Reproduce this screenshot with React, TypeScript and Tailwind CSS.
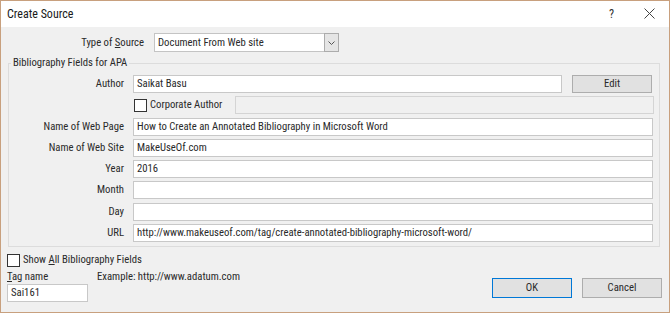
import React from "react";

const Check = ({ className = "" }: { className?: string }) => (
  <span className={"inline-block w-[13px] h-[13px] border border-[#333333] bg-white shrink-0 " + className} />
);

const Field = ({ value = "", className = "" }: { value?: string; className?: string }) => (
  <div className={"h-[18px] bg-white border border-[#c8c8c8] flex items-center pl-[3px] whitespace-nowrap overflow-hidden " + className}>
    {value}
  </div>
);

const Label = ({ children }: { children: React.ReactNode }) => (
  <div className="h-[18px] flex items-center justify-end whitespace-nowrap">{children}</div>
);

export default function App() {
  return (
    <div className="w-[670px] h-[313px] border border-[#c8a07e] flex flex-col bg-[#f0f0f0] font-['Roboto',sans-serif] [font-stretch:condensed] text-[10.7px] text-[#2a2a2a] leading-[14px] overflow-hidden">
      {/* title bar */}
      <div className="h-[26px] shrink-0 bg-white flex items-center pl-[6px] pr-[14px]">
        <span className="text-[12px] text-[#1a1a1a]">Create Source</span>
        <span className="ml-auto text-[12px] text-[#333] mr-[30px]">?</span>
        <svg width="11" height="11" viewBox="0 0 11 11" className="mb-[1px]">
          <path d="M0.5 0.5 L10.5 10.5 M10.5 0.5 L0.5 10.5" stroke="#444" strokeWidth="1" />
        </svg>
      </div>

      <div className="flex flex-col px-[6px]">
        {/* Type of source */}
        <div className="mt-[6px] h-[19px] flex items-center">
          <div className="w-[137px] text-right whitespace-nowrap">
            Type of <span className="underline">S</span>ource
          </div>
          <div className="ml-[10px] w-[185px] h-[19px] bg-white border border-[#c4c4c4] flex items-center">
            <span className="pl-[3px] flex-1 whitespace-nowrap">Document From Web site</span>
            <div className="w-[15px] h-[19px] -mr-[1px] bg-[#e5e5e5] border border-[#acacac] flex items-center justify-center">
              <svg width="7" height="4" viewBox="0 0 7 4">
                <path d="M0.5 0.5 L3.5 3.5 L6.5 0.5" stroke="#555" fill="none" strokeWidth="1" />
              </svg>
            </div>
          </div>
        </div>

        {/* group box */}
        <fieldset className="mt-[4px] ml-[1px] w-[652px] border border-[#dcdcdc] pt-[5px] pb-[4px] pr-[6px]">
          <legend className="ml-[2px] px-[2px] leading-[14px]">Bibliography Fields for APA</legend>
          <div className="grid grid-cols-[115px_1fr] gap-x-[9px] gap-y-[3.3px]">
            <Label>Author</Label>
            <div className="flex gap-[10px]">
              <Field value="Saikat Basu" className="w-[429px]" />
              <div className="w-[80px] h-[18px] bg-[#e1e1e1] border border-[#adadad] flex items-center justify-center">Edit</div>
            </div>

            <div />
            <div className="flex items-center">
              <div className="w-[102px] flex items-center">
                <Check className="ml-[1px]" />
                <span className="ml-[3px] whitespace-nowrap">Corporate Author</span>
              </div>
              <div className="flex-1 h-[18px] bg-[#f0f0f0] border border-[#d4d4d4] mr-[-1px]" />
            </div>

            <Label>Name of Web Page</Label>
            <Field value="How to Create an Annotated Bibliography in Microsoft Word" />
            <Label>Name of Web Site</Label>
            <Field value="MakeUseOf.com" />
            <Label>Year</Label>
            <Field value="2016" />
            <Label>Month</Label>
            <Field />
            <Label>Day</Label>
            <Field />
            <Label>URL</Label>
            <Field value="http://www.makeuseof.com/tag/create-annotated-bibliography-microsoft-word/" />
          </div>
        </fieldset>

        {/* bottom */}
        <div className="flex items-end pr-[1px]">
          <div className="flex flex-col">
            <div className="mt-[6px] h-[14px] flex items-center">
              <Check />
              <span className="ml-[3px] whitespace-nowrap">
                Show <span className="underline">A</span>ll Bibliography Fields
              </span>
            </div>
            <div className="mt-[3px] h-[14px] flex items-center whitespace-nowrap">
              <span className="w-[90px]">
                <span className="underline">T</span>ag name
              </span>
              <span>Example: http://www.adatum.com</span>
            </div>
            <Field value="Sai161" className="w-[81px]" />
          </div>
          <div className="ml-auto flex gap-[10px] mb-[4px]">
            <div className="w-[80px] h-[20px] bg-[#e1e1e1] border border-[#0078d7] flex items-center justify-center">OK</div>
            <div className="w-[80px] h-[20px] bg-[#e1e1e1] border border-[#adadad] flex items-center justify-center">Cancel</div>
          </div>
        </div>
      </div>
    </div>
  );
}
